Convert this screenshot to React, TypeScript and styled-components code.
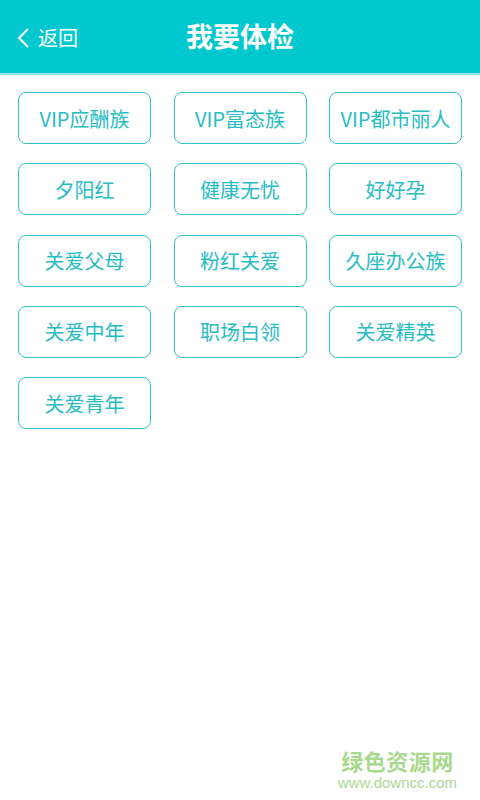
import styled, { createGlobalStyle } from 'styled-components'

const GlobalStyle = createGlobalStyle`
	html, body {
		margin: 0;
		padding: 0;
		background: #ffffff;
		font-family: "Noto Sans CJK SC", "Noto Sans", sans-serif;
	}
	* {
		box-sizing: border-box;
	}
`

const packages = [
	'VIP应酬族',
	'VIP富态族',
	'VIP都市丽人',
	'夕阳红',
	'健康无忧',
	'好好孕',
	'关爱父母',
	'粉红关爱',
	'久座办公族',
	'关爱中年',
	'职场白领',
	'关爱精英',
	'关爱青年',
]

export default function App() {
	return (
		<Page>
			<GlobalStyle />
			<Header>
				<Back>
					<svg width="16" height="24" viewBox="0 0 16 24">
						<path d="M12 3 L3 12 L12 21" fill="none" stroke="#fff" strokeWidth="2" />
					</svg>
					<BackText>返回</BackText>
				</Back>
				<Title>我要体检</Title>
			</Header>
			<Grid>
				{packages.map((name) => (
					<Item key={name}>{name}</Item>
				))}
			</Grid>
			<Watermark>
				<MarkTitle>绿色资源网</MarkTitle>
				<MarkUrl>www.downcc.com</MarkUrl>
			</Watermark>
		</Page>
	)
}

const Page = styled.div`
	position: relative;
	width: 480px;
	height: 800px;
	background: #fff;
	overflow: hidden;
`

const Header = styled.div`
	position: relative;
	height: 75px;
	background: #00c8ce;
	border-bottom: 2px solid #9ee6e9;
	display: flex;
	align-items: center;
	justify-content: center;
`

const Back = styled.div`
	position: absolute;
	left: 16px;
	top: 25px;
	display: flex;
	align-items: center;
	gap: 6px;
	color: #fff;
`

const BackText = styled.span`
	font-size: 20px;
	line-height: 26px;
`

const Title = styled.h1`
	margin: 0;
	color: #fff;
	font-size: 27px;
	font-weight: 700;
	margin-top: -2px;
`

const Grid = styled.div`
	display: grid;
	grid-template-columns: repeat(3, 133px);
	column-gap: 22.5px;
	row-gap: 19.3px;
	padding: 17px 18px 0 18px;
`

const Item = styled.div`
	height: 52px;
	border: 1px solid #2fc1c9;
	border-radius: 8px;
	display: flex;
	align-items: center;
	justify-content: center;
	color: #27bcc4;
	font-size: 20px;
	white-space: nowrap;
`

const Watermark = styled.div`
	position: absolute;
	right: 23px;
	bottom: 10px;
	display: flex;
	flex-direction: column;
	align-items: center;
	gap: 4px;
`

const MarkTitle = styled.div`
	color: #a9d98f;
	font-size: 22px;
	font-weight: 700;
	line-height: 22px;
	letter-spacing: 0.5px;
`

const MarkUrl = styled.div`
	color: #a9d98f;
	font-family: "Liberation Sans", Arial, sans-serif;
	font-size: 15px;
	line-height: 15px;
`
